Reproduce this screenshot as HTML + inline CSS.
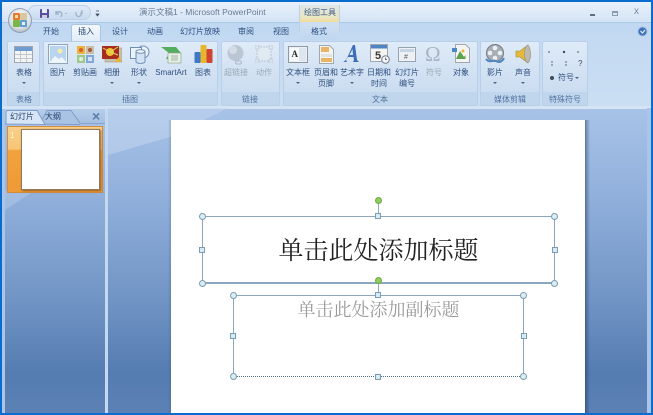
<!DOCTYPE html>
<html><head><meta charset="utf-8">
<style>
html,body{margin:0;padding:0;width:653px;height:415px;overflow:hidden;background:#0a6ccf}
*{box-sizing:border-box}
#r{position:absolute;left:0;top:0;width:653px;height:415px;overflow:hidden;font-family:"Liberation Sans","Noto Sans CJK SC",sans-serif;filter:blur(.35px)}
.a{position:absolute}
.t{position:absolute;font-size:8px;line-height:10px;color:#2f4f7e;white-space:nowrap;text-align:center;transform:translateX(-50%)}
.g{color:#9aa6b6}
.ar{position:absolute;top:82px;width:0;height:0;border:2px solid transparent;border-top:2px solid #4a6288;border-bottom:0;margin-left:-2px}
.tab{position:absolute;top:26px;font-size:8px;line-height:11px;color:#2c4f80;transform:translateX(-50%);white-space:nowrap}
.grp{position:absolute;top:41px;height:65px;border:1px solid #b9cfe7;border-radius:2px;background:linear-gradient(#dfebf8,#d4e3f4 40%,#cbddf0 78%)}
.grp i{position:absolute;left:0;right:0;bottom:0;height:13px;background:#c0d6ed;display:block}
.gl{position:absolute;top:95px;font-size:8px;line-height:10px;color:#4f719f;transform:translateX(-50%);white-space:nowrap}
.h{position:absolute;width:6px;height:6px;background:#d5ecf5;border:1px solid #7d9bb5}
.c{position:absolute;width:7px;height:7px;border-radius:50%;background:#d9eef0;border:1px solid #7d9bb5}
svg{position:absolute;overflow:hidden}
</style></head><body>
<div id="r">
<div class="a" style="left:2px;top:2px;width:649px;height:20px;background:linear-gradient(#e9f1fa,#d3e3f5)"></div>
<div class="a" style="left:2px;top:22px;width:649px;height:86px;background:linear-gradient(#bfd7f1,#c4daf2 20%,#cadef3)"></div>
<div class="a" style="left:2px;top:22px;width:649px;height:1px;background:#a9c8ea"></div>
<div class="a" style="left:28px;top:5px;width:63px;height:15px;border-radius:8px;background:linear-gradient(#dfeaf7,#c9dbf0);border:1px solid #bdd1e8"></div>

<!-- office button -->
<div class="a" style="left:8px;top:8px;width:24px;height:25px;border-radius:50%;background:radial-gradient(circle at 50% 35%,#fdfdfd,#dadee3 60%,#8e9aa8);border:1px solid #8ea0b6"></div>
<svg style="left:13px;top:13px" width="15" height="15"><rect x="0" y="0" width="7" height="7" rx="1" fill="#e8782c"/><rect x="7" y="0" width="7" height="7" rx="1" fill="#d8c8a0"/><rect x="0" y="7" width="7" height="7" rx="1" fill="#7ab648"/><rect x="7" y="7" width="7" height="7" rx="1" fill="#5fa0cc"/><rect x="2" y="2" width="3" height="3" fill="#f8e0b0"/><rect x="9" y="9" width="3" height="3" fill="#e8f2f8"/></svg>

<!-- QAT -->
<svg style="left:40px;top:9px" width="62" height="12">
<rect x="0" y="0" width="9" height="9" rx="1" fill="#5a4f9e"/><rect x="2" y="0" width="5" height="4" fill="#e8eef8"/><rect x="2" y="6" width="5" height="3" fill="#c8cfe0"/>
<path d="M16 5c1-3 5-3 6 0l-1 3M16 2v3h3" stroke="#9db2cc" stroke-width="1.4" fill="none"/>
<path d="M25 4.500h2" stroke="#a5b8d0"/>
<path d="M36 3c-1 6 6 6 6 0M42 1v3h-2" stroke="#9db2cc" stroke-width="1.3" fill="none"/>
<path d="M56 2h3M56 5h3l-1.500 2z" stroke="#3a4d68" stroke-width=".7" fill="#3a4d68"/>
</svg>

<div class="a" style="left:139px;top:6px;font-size:8.500px;line-height:12px;color:#6a7c94;white-space:nowrap">演示文稿1 - Microsoft PowerPoint</div>

<!-- tool context tab -->
<div class="a" style="left:299px;top:5px;width:40px;height:17px;background:linear-gradient(#dfe6ea,#e8e6c4 70%,#f2dc96)"></div>
<div class="a" style="left:299px;top:22px;width:40px;height:18px;background:linear-gradient(#cfdff1,#bfd7f0)"></div>
<div class="a" style="left:299px;top:5px;width:1px;height:27px;background:#c0d0e0"></div>
<div class="a" style="left:339px;top:5px;width:1px;height:27px;background:#c0d0e0"></div>
<div class="a" style="left:304px;top:7px;font-size:8px;line-height:12px;color:#3c5a82;white-space:nowrap">绘图工具</div>

<!-- window controls -->
<div class="a" style="left:590px;top:14px;width:5px;height:2px;background:#5c6f88"></div>
<div class="a" style="left:612px;top:11px;width:6px;height:5px;border:1px solid #8a9bb0;border-top-width:2px"></div>
<div class="a" style="left:634px;top:6px;font-size:10px;line-height:11px;color:#7a8ba2">x</div>

<!-- tabs -->
<div class="a" style="left:71px;top:24px;width:30px;height:17px;background:linear-gradient(#f4f8fc,#e0ecf8);border:1px solid #a8c4e2;border-bottom:none;border-radius:3px 3px 0 0"></div>
<div class="tab" style="left:51px">开始</div>
<div class="tab" style="left:86px;color:#24426e">插入</div>
<div class="tab" style="left:120px">设计</div>
<div class="tab" style="left:155px">动画</div>
<div class="tab" style="left:200px">幻灯片放映</div>
<div class="tab" style="left:246px">审阅</div>
<div class="tab" style="left:281px">视图</div>
<div class="tab" style="left:319px">格式</div>
<svg style="left:637px;top:26px" width="11" height="11"><circle cx="5.500" cy="5.500" r="4.500" fill="#3f73b8" stroke="#9fbde0"/><path d="M3.500 5l2 2 2.500-3" stroke="#e8f2fc" stroke-width="1.200" fill="none"/></svg>

<!-- groups -->
<div class="grp" style="left:7px;width:33px"><i></i></div>
<div class="grp" style="left:43px;width:175px"><i></i></div>
<div class="grp" style="left:221px;width:59px"><i></i></div>
<div class="grp" style="left:283px;width:195px"><i></i></div>
<div class="grp" style="left:480px;width:60px"><i></i></div>
<div class="grp" style="left:542px;width:46px"><i></i></div>
<div class="gl" style="left:24px">表格</div>
<div class="gl" style="left:130px">插图</div>
<div class="gl" style="left:250px">链接</div>
<div class="gl" style="left:380px">文本</div>
<div class="gl" style="left:510px">媒体剪辑</div>
<div class="gl" style="left:565px">特殊符号</div>

<!-- table icon -->
<svg style="left:14px;top:46px" width="20" height="17"><rect x=".5" y=".5" width="18" height="16" fill="#f3f4f4" stroke="#9ea7b2"/><rect x="1" y="1" width="17" height="4" fill="#6f9bd0"/><path d="M1 8.500h17M1 12.500h17M6.500 5v11M12.500 5v11" stroke="#c4c8cc"/></svg>
<div class="t" style="left:24px;top:68px">表格</div>
<div class="ar" style="left:24px"></div>

<!-- picture icon -->
<svg style="left:48px;top:44px" width="20" height="20"><rect x=".5" y=".5" width="19" height="19" fill="#eef3f8" stroke="#93a5ba"/><rect x="2" y="2" width="16" height="16" fill="#b9d4f0"/><circle cx="12" cy="7" r="2.500" fill="#f5eca6"/><path d="M2 18l5-6 4 3 3-2 4 5z" fill="#eef6fb"/></svg>
<div class="t" style="left:58px;top:68px">图片</div>
<!-- clipart -->
<svg style="left:76px;top:45px" width="19" height="19"><rect x="1" y="1" width="8" height="8" fill="#edb33d"/><rect x="10" y="1" width="8" height="8" fill="#c9bfa8"/><rect x="1" y="10" width="8" height="8" fill="#9dc98a"/><rect x="10" y="10" width="8" height="8" fill="#7fa8d8"/><circle cx="5" cy="5" r="2" fill="#d8602c"/><circle cx="14" cy="5" r="2" fill="#a8583c"/><circle cx="5" cy="14" r="2" fill="#e4f0dc"/><rect x="12" y="12" width="4" height="4" fill="#d4e4f4"/></svg>
<div class="t" style="left:85px;top:68px">剪贴画</div>
<!-- album -->
<svg style="left:102px;top:45px" width="20" height="18"><rect x="3" y="3" width="17" height="14" fill="#c6c1ae" stroke="#a09a88" stroke-width=".6"/><rect x="0" y="1" width="17" height="13" fill="#a52f1c"/><circle cx="8" cy="7" r="4" fill="#f0c330"/><path d="M8 7l8-5M8 7l8 3M8 7L1 3" stroke="#e8d36a"/><path d="M12 17l6-6 1 6z" fill="#e9b23c"/></svg>
<div class="t" style="left:112px;top:68px">相册</div>
<div class="ar" style="left:112px"></div>
<!-- shapes -->
<svg style="left:130px;top:45px" width="20" height="20"><circle cx="13" cy="7" r="6" fill="#eaf2fa" stroke="#6f8fb4"/><rect x="0.500" y="2.500" width="11" height="11" fill="#eaf2fa" stroke="#6f8fb4"/><path d="M6 6.500h9v10c0 2.500-9 2.500-9 0z" fill="#d3e3f4" stroke="#6f8fb4"/><ellipse cx="10.500" cy="6.500" rx="4.500" ry="1.800" fill="#f3f8fd" stroke="#6f8fb4"/></svg>
<div class="t" style="left:139px;top:68px">形状</div>
<div class="ar" style="left:139px"></div>
<!-- smartart -->
<svg style="left:160px;top:47px" width="22" height="17"><path d="M1 0h15l5 6-5 6H6l3-6z" fill="#55ae5f"/><rect x="8" y="6" width="13" height="10" fill="#e8f0e6" stroke="#8fa88f" stroke-width=".7"/><path d="M11 9h7M11 11h7M11 13h7" stroke="#8a9b8c" stroke-width=".8"/></svg>
<div class="t" style="left:171px;top:68px">SmartArt</div>
<!-- chart -->
<svg style="left:194px;top:44px" width="20" height="20"><rect x="0.500" y="8" width="6" height="11" rx="1" fill="#3f78c4"/><rect x="6.500" y="1" width="6" height="18" rx="1" fill="#e8b52e"/><rect x="12.500" y="5" width="6" height="14" rx="1" fill="#cf4433"/></svg>
<div class="t" style="left:203px;top:68px">图表</div>

<!-- hyperlink -->
<svg style="left:226px;top:44px" width="20" height="21" opacity=".75"><circle cx="9.500" cy="9" r="8" fill="#b0bcc8"/><circle cx="7" cy="6" r="4" fill="#d2dae2"/><path d="M11 17h3a1.500 1.500 0 010 3h-3a1.500 1.500 0 010-3" stroke="#9eaab8" stroke-width="1" fill="none"/></svg>
<div class="t g" style="left:236px;top:68px">超链接</div>
<svg style="left:255px;top:45px" width="18" height="18" opacity=".7"><rect x="2" y="2" width="14" height="14" fill="#e4ecf3" stroke="#a9b6c4" stroke-dasharray="2 1"/><rect x="0" y="0" width="4" height="4" fill="#dce4ec" stroke="#a9b6c4" stroke-width=".6"/><rect x="14" y="0" width="4" height="4" fill="#dce4ec" stroke="#a9b6c4" stroke-width=".6"/><rect x="0" y="14" width="4" height="4" fill="#dce4ec" stroke="#a9b6c4" stroke-width=".6"/><rect x="14" y="14" width="4" height="4" fill="#dce4ec" stroke="#a9b6c4" stroke-width=".6"/></svg>
<div class="t g" style="left:264px;top:68px">动作</div>

<!-- text box -->
<svg style="left:288px;top:46px" width="20" height="17"><rect x=".5" y=".5" width="19" height="16" fill="#edf1f5" stroke="#8c98a6"/><rect x="2" y="2" width="16" height="13" fill="#f8f9fb"/><rect x="11" y="2" width="7" height="13" fill="#dde5ee"/><text x="3.500" y="11" font-family="Liberation Serif,serif" font-size="9" font-weight="bold" fill="#2c2c2c">A</text></svg>
<div class="t" style="left:298px;top:68px">文本框</div>
<div class="ar" style="left:298px"></div>
<!-- header -->
<svg style="left:319px;top:45px" width="15" height="19"><path d="M.5.500h10l4 4v14H.5z" fill="#f5f5f0" stroke="#a0a8b0"/><rect x="2" y="2" width="8" height="5" fill="#eab468"/><rect x="2" y="9" width="11" height="3" fill="#e2e4e2"/><rect x="2" y="13" width="11" height="4" fill="#eab468"/></svg>
<div class="t" style="left:326px;top:68px">页眉和</div>
<div class="t" style="left:326px;top:79px">页脚</div>
<!-- wordart -->
<svg style="left:342px;top:44px" width="18" height="20"><path d="M1 18c4-1 6-9 10-17h2l2 15 2 2h-6l1-2-.5-3H6l-2 3 1 2zM7.500 11h3.500L10.500 5z" fill="#3d6db4" fill-rule="evenodd"/></svg>
<div class="t" style="left:352px;top:68px">艺术字</div>
<div class="ar" style="left:352px"></div>
<!-- date -->
<svg style="left:370px;top:44px" width="20" height="20"><rect x=".5" y=".5" width="17" height="17" fill="#f4f4f2" stroke="#a0a8b0"/><rect x="1" y="1" width="16" height="3.500" fill="#4f83c4"/><text x="5" y="15" font-family="Liberation Sans,sans-serif" font-size="11" font-weight="bold" fill="#3a3a3a">5</text><circle cx="15.500" cy="15.500" r="3.800" fill="#f4f6f6" stroke="#6f7b88"/><path d="M15.500 13.500v2h1.500" stroke="#445" stroke-width=".7" fill="none"/></svg>
<div class="t" style="left:379px;top:68px">日期和</div>
<div class="t" style="left:379px;top:79px">时间</div>
<!-- slide number -->
<svg style="left:398px;top:47px" width="18" height="15"><rect x=".5" y=".5" width="17" height="14" fill="#eef1f4" stroke="#97a3b0"/><rect x="2" y="2" width="14" height="3" fill="#c7d6e6"/><text x="6" y="12" font-family="Liberation Sans,sans-serif" font-size="7" fill="#555">#</text></svg>
<div class="t" style="left:407px;top:68px">幻灯片</div>
<div class="t" style="left:407px;top:79px">编号</div>
<!-- omega -->
<div class="a" style="left:425px;top:42px;font-family:'Liberation Serif',serif;font-size:21px;line-height:24px;color:#a9b5c3">Ω</div>
<div class="t g" style="left:434px;top:68px">符号</div>
<!-- object -->
<svg style="left:452px;top:44px" width="18" height="19"><path d="M3.500.500h10l4 4v14h-14z" fill="#f4f5f3" stroke="#a0a8b0"/><rect x="0" y="4" width="5" height="4" fill="#4d86c4"/><path d="M4 15l4-8 4 6 1.500-2v4z" fill="#5aa34a"/><circle cx="11" cy="7" r="1.500" fill="#e8b52e"/></svg>
<div class="t" style="left:461px;top:68px">对象</div>

<!-- movie -->
<svg style="left:485px;top:44px" width="21" height="21"><circle cx="10" cy="9" r="8.500" fill="#a8aeb6" stroke="#747c86"/><circle cx="10" cy="4" r="2.300" fill="#eef1f4"/><circle cx="10" cy="14" r="2.300" fill="#eef1f4"/><circle cx="5" cy="9" r="2.300" fill="#eef1f4"/><circle cx="15" cy="9" r="2.300" fill="#eef1f4"/><path d="M1 15c4 5 7 0 10 2s6 1 8-3" stroke="#4f88c0" stroke-width="2" fill="none"/></svg>
<div class="t" style="left:495px;top:68px">影片</div>
<div class="ar" style="left:495px"></div>
<!-- sound -->
<svg style="left:515px;top:44px" width="16" height="20"><path d="M1 7h4l8-6v18l-8-6H1z" fill="#e4b93c" stroke="#a68a34" stroke-width=".6"/><ellipse cx="12.500" cy="10" rx="3" ry="8.500" fill="#bdbab0" stroke="#8f8b80" stroke-width=".6"/></svg>
<div class="t" style="left:523px;top:68px">声音</div>
<div class="ar" style="left:523px"></div>

<!-- symbols -->
<svg style="left:545px;top:48px" width="40" height="36" fill="#3d4a5c">
<circle cx="4" cy="4" r=".8"/><circle cx="19" cy="4" r="1.200"/><circle cx="33" cy="4" r=".8"/>
<circle cx="7" cy="14" r=".7"/><circle cx="7" cy="17" r=".7"/><circle cx="21" cy="14" r=".7"/><circle cx="21" cy="17" r=".7"/>
<text x="33" y="18" font-size="8" font-family="Liberation Sans,sans-serif">?</text>
<circle cx="7" cy="30" r="2"/></svg>
<div class="t" style="left:566px;top:73px">符号</div>
<div class="ar" style="left:577px;top:77px"></div>

<!-- main bg -->
<div class="a" style="left:2px;top:108px;width:649px;height:305px;background:linear-gradient(#a8c3e8 0,#90afdb 30%,#7094c4 63%,#557cb1 87%,#5b81b5)"></div>
<div class="a" style="left:2px;top:106px;width:649px;height:3px;background:#d5e4f5"></div>
<svg style="left:108px;top:108px" width="120" height="60"><path d="M0 47L62 29 120 0H0z" fill="#c2d5ef" opacity=".55"/></svg>
<!-- left pane -->
<div class="a" style="left:5px;top:109px;width:100px;height:304px;background:linear-gradient(#a8c3e8 0,#90afdb 30%,#7094c4 63%,#557cb1 87%,#5b81b5)"></div>
<div class="a" style="left:2px;top:109px;width:3px;height:304px;background:#a9c5ea"></div>
<svg style="left:5px;top:190px" width="30" height="24"><path d="M0 20L26 3V0H0z" fill="#c2d5ef" opacity=".35"/></svg>
<div class="a" style="left:105px;top:109px;width:3px;height:304px;background:#c4d8f2"></div>
<!-- tabs pane -->
<div class="a" style="left:5px;top:109px;width:100px;height:15px;background:linear-gradient(#b5cdea,#a5bfe2);border-bottom:1px solid #86a4cc"></div>
<svg style="left:5px;top:110px" width="75" height="15"><path d="M35 14L42 .5h24l10 14z" fill="#a9c3e5" stroke="#7f9ec8"/><path d="M1 14V2q0-1.500 2-1.500h29l8 14z" fill="#d6e5f6" stroke="#7f9ec8"/></svg>
<div class="a" style="left:10px;top:111px;font-size:8px;line-height:12px;color:#23406c;white-space:nowrap">幻灯片</div>
<div class="a" style="left:45px;top:111px;font-size:8px;line-height:12px;color:#23406c;white-space:nowrap">大纲</div>
<div class="a" style="left:92px;top:109px;font-size:14px;line-height:15px;font-weight:bold;color:#5a7ca8">×</div>
<!-- thumb -->
<div class="a" style="left:7px;top:126px;width:96px;height:67px;background:linear-gradient(#f9cf8a,#f7c576 34%,#f2a23c 36%,#ee9a36);border:1px solid #d18c3c"></div>
<div class="a" style="left:10px;top:131px;font-size:8px;line-height:10px;color:#fff4d8">1</div>
<div class="a" style="left:21px;top:129px;width:79px;height:61px;background:#fff;border:1px solid #8f7a5c;box-shadow:1px 1px 2px #9c5f20"></div>

<!-- slide -->
<div class="a" style="left:168px;top:120px;width:3px;height:295px;background:linear-gradient(90deg,transparent,rgba(40,70,110,.2))"></div>
<div class="a" style="left:171px;top:120px;width:414px;height:295px;background:#fff"></div>
<div class="a" style="left:585px;top:120px;width:5px;height:295px;background:linear-gradient(90deg,rgba(30,50,90,.5),transparent)"></div>
<div class="a" style="left:647px;top:108px;width:4px;height:305px;background:#a9c5ea"></div>

<!-- frame edges -->
<div class="a" style="left:0;top:0;width:653px;height:2px;background:#0a6ccf"></div>
<div class="a" style="left:0;top:0;width:2px;height:415px;background:#0a6ccf"></div>
<div class="a" style="left:651px;top:0;width:2px;height:415px;background:#0a6ccf"></div>
<div class="a" style="left:0;top:413px;width:653px;height:2px;background:#0a6ccf"></div>

<!-- title placeholder -->
<div class="a" style="left:202px;top:216px;width:353px;height:68px;border:1px solid #8ca6bf;border-bottom-width:2px"></div>
<div class="a" style="left:378px;top:203px;width:1px;height:13px;background:#8ca6bf"></div>
<div class="a" style="left:375px;top:197px;width:7px;height:7px;border-radius:50%;background:#8fce5a;border:1px solid #6fa84a"></div>
<div class="c" style="left:199px;top:213px"></div><div class="h" style="left:375px;top:213px"></div><div class="c" style="left:551px;top:213px"></div>
<div class="h" style="left:199px;top:247px"></div><div class="h" style="left:552px;top:247px"></div>
<div class="c" style="left:199px;top:280px"></div><div class="c" style="left:551px;top:280px"></div>

<!-- subtitle placeholder -->
<div class="a" style="left:233px;top:295px;width:291px;height:82px;border:1px solid #8ca6bf;border-bottom:1px dotted #4f6a88"></div>
<div class="a" style="left:378px;top:283px;width:1px;height:12px;background:#8ca6bf"></div>
<div class="c" style="left:230px;top:292px"></div><div class="h" style="left:375px;top:292px"></div><div class="c" style="left:520px;top:292px"></div>
<div class="h" style="left:230px;top:333px"></div><div class="h" style="left:521px;top:333px"></div>
<div class="c" style="left:230px;top:373px"></div><div class="h" style="left:375px;top:374px"></div><div class="c" style="left:520px;top:373px"></div>
<div class="a" style="left:375px;top:277px;width:7px;height:7px;border-radius:50%;background:#8fce5a;border:1px solid #6fa84a"></div>
</div>
<div class="a" style="left:202px;top:234px;width:353px;text-align:center;font-family:'Noto Serif CJK SC',serif;font-size:25px;line-height:30px;color:#222;white-space:nowrap">单击此处添加标题</div>
<div class="a" style="left:233px;top:298px;width:291px;text-align:center;font-family:'Noto Serif CJK SC',serif;font-size:18px;line-height:22px;color:#9b9b9b;white-space:nowrap">单击此处添加副标题</div>
</body></html>
